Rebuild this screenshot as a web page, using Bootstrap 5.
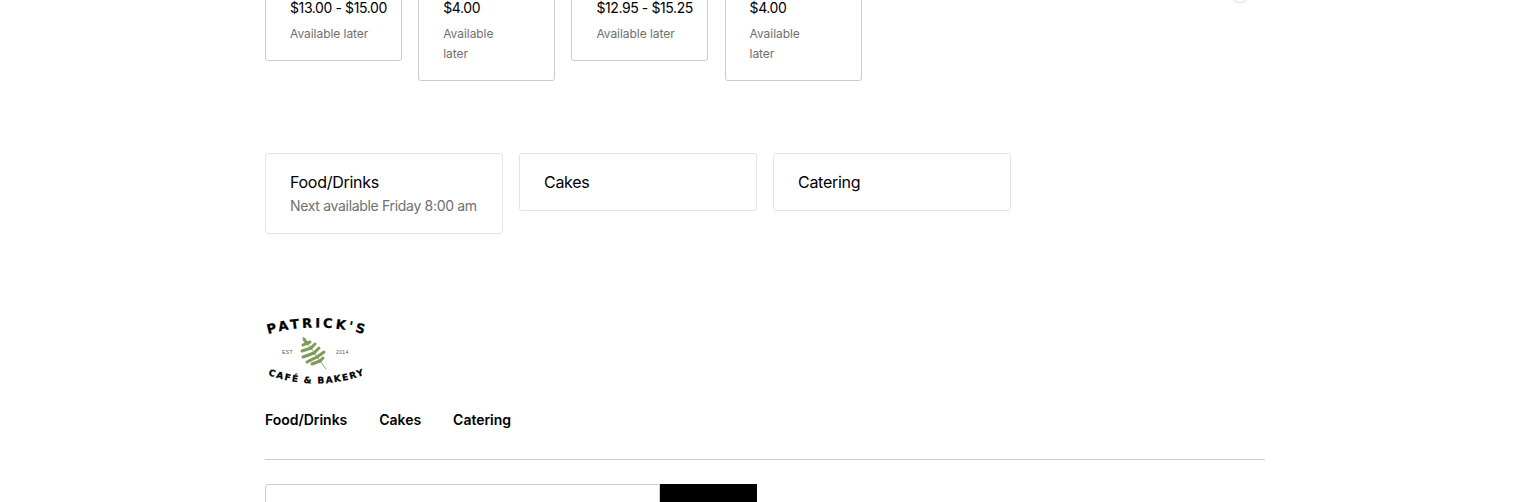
<!DOCTYPE html>
<html lang="en">
<head>
  <meta charset="UTF-8">
  <meta name="viewport" content="width=device-width, initial-scale=1.0">
  <title>Patrick's Cafe &amp; Bakery</title>
  <link href="https://cdn.jsdelivr.net/npm/bootstrap@5.3.0/dist/css/bootstrap.min.css" rel="stylesheet">
  <style>
    html, body { height: 502px; overflow: hidden; }
    body { font-family: Inter, "Noto Sans", sans-serif; color: #000; background: #fff; }
    .page-wrap { width: 1000px; margin-left: 265px; }

    /* menu items, cropped by the top of the window */
    .item-row { margin-top: -40px; height: 121px; column-gap: 16.2px; }
    .item-box { border: 1px solid #ccc; border-radius: 3px; background: #fff; width: 137px; padding: 37px 14px 16px 24px; flex-shrink: 0; }
    .item-price { font-size: 14px; line-height: 20px; margin-bottom: 6px; white-space: nowrap; letter-spacing: -.4px; }
    .item-avail { font-size: 12px; line-height: 20px; color: #6f6f6f; letter-spacing: -.05px; }
    .scroll-dot { width: 16px; height: 16px; border-radius: 50%; background: #fff; box-shadow: 0 1px 2px rgba(0,0,0,.14); margin-top: 26px; margin-left: auto; margin-right: 17px; }

    /* order type cards */
    .order-row { margin-top: 72px; }
    .order-box { width: 238px; border: 1px solid #e4e4e4; border-radius: 3px; padding: 16px 24px; background: #fff; }
    .order-title { font-size: 16px; line-height: 24px; letter-spacing: -.28px; }
    .order-sub { font-size: 14px; line-height: 23px; color: #6f6f6f; white-space: nowrap; letter-spacing: -.32px; }

    /* footer */
    .foot-logo { display: block; margin-top: 81px; }
    .logo-txt { font-family: "DejaVu Sans", sans-serif; font-weight: 700; fill: #000; stroke: #000; stroke-width: .25px; }
    .logo-small { font-family: "Liberation Sans", sans-serif; font-size: 5px; fill: #555; letter-spacing: .4px; }
    .foot-links { margin-top: 21px; gap: 32px; }
    .foot-links a { font-size: 14px; line-height: 22px; font-weight: 600; color: #000; text-decoration: none; letter-spacing: -.03px; }
    .foot-rule { margin: 28px 0 24px; border: 0; border-top: 1px solid #ccc; opacity: 1; }
    .signup-box { width: 492px; height: 60px; }
    .signup-input { flex: 1; border: 1px solid #ccc; border-radius: 3px 0 0 0; }
    .signup-btn { width: 97px; background: #000; border: 0; border-radius: 0; }
  </style>
</head>
<body>
  <div class="page-wrap">

    <!-- Items -->
    <div class="item-row d-flex align-items-start">
      <div class="item-box">
        <div class="item-price">$13.00 - $15.00</div>
        <div class="item-avail">Available later</div>
      </div>
      <div class="item-box">
        <div class="item-price">$4.00</div>
        <div class="item-avail">Available<br>later</div>
      </div>
      <div class="item-box">
        <div class="item-price">$12.95 - $15.25</div>
        <div class="item-avail">Available later</div>
      </div>
      <div class="item-box">
        <div class="item-price">$4.00</div>
        <div class="item-avail">Available<br>later</div>
      </div>
      <div class="scroll-dot"></div>
    </div>

    <!-- Order types -->
    <div class="order-row d-flex align-items-start gap-3">
      <div class="order-box">
        <div class="order-title">Food/Drinks</div>
        <div class="order-sub">Next available Friday 8:00 am</div>
      </div>
      <div class="order-box">
        <div class="order-title">Cakes</div>
      </div>
      <div class="order-box">
        <div class="order-title">Catering</div>
      </div>
    </div>

    <!-- Logo -->
    <svg class="foot-logo" width="102" height="73" viewBox="0 0 102 73" role="img" aria-label="Patrick's Cafe and Bakery">
      <defs>
        <path id="arcTop" d="M3 19 Q51 6 99 19"/>
        <path id="arcBottom" d="M3 60 Q51 77 99 60"/>
      </defs>
      <text class="logo-txt" font-size="13"><textPath href="#arcTop" textLength="97" lengthAdjust="spacing">PATRICK'S</textPath></text>
      <text class="logo-txt" font-size="9"><textPath href="#arcBottom" textLength="98" lengthAdjust="spacing">CAFÉ &amp; BAKERY</textPath></text>
      <text class="logo-small" x="17" y="39">EST</text>
      <text class="logo-small" x="71" y="39">2014</text>
      <!-- leaf -->
      <g fill="none" stroke="#7d9c57" stroke-linecap="round">
        <path d="M38 22 L61 54" stroke-width="1" stroke="#93ab75"/>
        <g stroke-width="3">
          <path d="M39 24 L42 29"/>
          <path d="M42 28 L38 30"/><path d="M42 28 L45 27"/>
          <path d="M46 33 L37 36"/><path d="M46 33 L50 29"/>
          <path d="M49 38 L38 42"/><path d="M49 38 L54 33"/>
          <path d="M52 42 L42 47"/><path d="M52 42 L59 37"/>
          <path d="M55 46 L47 49"/><path d="M55 46 L58 43"/>
        </g>
      </g>
    </svg>

    <!-- Footer links -->
    <div class="foot-links d-flex">
      <a href="#">Food/Drinks</a>
      <a href="#">Cakes</a>
      <a href="#">Catering</a>
    </div>

    <hr class="foot-rule">

    <form class="signup-box d-flex">
      <input class="signup-input" type="email" aria-label="Email">
      <button class="signup-btn" type="button" aria-label="Subscribe"></button>
    </form>
  </div>

  <script src="https://cdn.jsdelivr.net/npm/bootstrap@5.3.0/dist/js/bootstrap.bundle.min.js"></script>
</body>
</html>
